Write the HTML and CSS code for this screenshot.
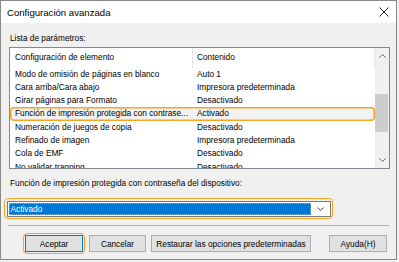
FILE: index.html
```html
<!DOCTYPE html>
<html lang="es">
<head>
    <meta charset="utf-8">
    <title>Configuración avanzada</title>
    <link rel="stylesheet" href="styles.css">
</head>
<body>
    <div class="dialog">
        <header class="title-bar">
            <span class="title">Configuración avanzada</span>
            <svg class="close-icon" width="10" height="10" viewBox="0 0 10 10">
                <path d="M0.5 0.5 L9.5 9.5 M9.5 0.5 L0.5 9.5" stroke="#222" stroke-width="1" fill="none"/>
            </svg>
        </header>
        <main class="dialog-body">
            <div class="label label-list">Lista de parámetros:</div>
            <div class="list-box">
                <div class="list-main">
                    <div class="list-header">
                        <div class="col col-name">Configuración de elemento</div>
                        <div class="col col-value">Contenido</div>
                    </div>
                    <div class="list-rows">
                        <div class="row"><div class="col col-name">Modo de omisión de páginas en blanco</div><div class="col col-value">Auto 1</div></div>
                        <div class="row"><div class="col col-name">Cara arriba/Cara abajo</div><div class="col col-value">Impresora predeterminada</div></div>
                        <div class="row"><div class="col col-name">Girar páginas para Formato</div><div class="col col-value">Desactivado</div></div>
                        <div class="row selected"><div class="col col-name">Función de impresión protegida con contrase...</div><div class="col col-value">Activado</div></div>
                        <div class="row"><div class="col col-name">Numeración de juegos de copia</div><div class="col col-value">Desactivado</div></div>
                        <div class="row"><div class="col col-name">Refinado de imagen</div><div class="col col-value">Impresora predeterminada</div></div>
                        <div class="row"><div class="col col-name">Cola de EMF</div><div class="col col-value">Desactivado</div></div>
                        <div class="row"><div class="col col-name">No validar trapping</div><div class="col col-value">Desactivado</div></div>
                    </div>
                </div>
                <div class="scrollbar">
                    <svg class="scroll-arrow" width="7" height="4" viewBox="0 0 7 4">
                        <path d="M0.5 3.5 L3.5 0.5 L6.5 3.5" stroke="#606060" stroke-width="1" fill="none"/>
                    </svg>
                    <div class="scroll-track">
                        <div class="scroll-thumb"></div>
                    </div>
                    <svg class="scroll-arrow" width="7" height="4" viewBox="0 0 7 4">
                        <path d="M0.5 0.5 L3.5 3.5 L6.5 0.5" stroke="#606060" stroke-width="1" fill="none"/>
                    </svg>
                </div>
            </div>
            <div class="label label-setting">Función de impresión protegida con contraseña del dispositivo:</div>
            <div class="focus-ring combo-ring">
                <div class="combo">
                    <div class="combo-value"><span class="combo-text">Activado</span></div>
                    <div class="combo-arrow">
                        <svg width="7" height="4" viewBox="0 0 7 4">
                            <path d="M0.5 0.5 L3.5 3.5 L6.5 0.5" stroke="#404040" stroke-width="1" fill="none"/>
                        </svg>
                    </div>
                </div>
            </div>
            <div class="separator"></div>
            <div class="button-row">
                <span class="focus-ring button-ring"><button class="btn btn-default btn-accept">Aceptar</button></span>
                <button class="btn btn-cancel">Cancelar</button>
                <button class="btn btn-restore">Restaurar las opciones predeterminadas</button>
                <button class="btn btn-help">Ayuda(H)</button>
            </div>
        </main>
    </div>
</body>
</html>
```

FILE: styles.css
```css
:root {
    --dialog-gray: #f0f0f0;
    --border-gray: #888888;
    --list-border: #828790;
    --focus-orange: #f5a524;
    --select-blue: #0078d7;
    --button-face: #e1e1e1;
    --button-border: #adadad;
    --ui-font: 'Liberation Sans', Arial, sans-serif;
}

* {
    box-sizing: border-box;
    margin: 0;
    padding: 0;
}

body {
    font-family: var(--ui-font);
    font-size: 8.3px;
    color: #000;
    background-color: var(--dialog-gray);
}

.dialog {
    width: 397px;
    height: 260px;
    border: 1px solid var(--border-gray);
    background-color: var(--dialog-gray);
    display: flex;
    flex-direction: column;
}

.title-bar {
    height: 22px;
    background-color: white;
    display: flex;
    align-items: center;
    justify-content: space-between;
    padding: 0 7px 0 6px;
}

.title {
    font-size: 9.6px;
}

.dialog-body {
    display: flex;
    flex-direction: column;
    padding-top: 9px;
}

.label {
    height: 12px;
    line-height: 12px;
    padding-left: 9px;
    white-space: nowrap;
}

.label-list {
    margin-bottom: 3px;
}

.list-box {
    margin-left: 8px;
    width: 381px;
    height: 122px;
    border: 1px solid var(--list-border);
    background-color: white;
    display: flex;
}

.list-main {
    flex: 1;
    display: flex;
    flex-direction: column;
    overflow: hidden;
}

.list-header {
    height: 19.5px;
    display: flex;
    align-items: center;
    flex-shrink: 0;
}

.list-header .col {
    height: 100%;
    line-height: 19px;
    border-right: 1px solid #e5e5e5;
}

.col {
    white-space: nowrap;
    overflow: hidden;
}

.col-name {
    width: 183px;
    padding-left: 5px;
}

.col-value {
    flex: 1;
    padding-left: 4px;
}

.list-rows {
    display: flex;
    flex-direction: column;
}

.row {
    height: 13.3px;
    line-height: 13.3px;
    display: flex;
    flex-shrink: 0;
}

.row.selected {
    background-color: #f2f2f2;
    border-radius: 4px;
    box-shadow: inset 0 0 0 1.5px var(--focus-orange);
}

.scrollbar {
    width: 14px;
    background-color: var(--dialog-gray);
    display: flex;
    flex-direction: column;
    align-items: center;
}

.scroll-arrow {
    flex-shrink: 0;
    margin: 6px 0;
}

.scroll-track {
    flex: 1;
    width: 100%;
    display: flex;
    flex-direction: column;
    padding-top: 30px;
}

.scroll-thumb {
    height: 38px;
    background-color: #cdcdcd;
    margin: 0 1px 0 0;
}

.label-setting {
    margin-top: 8px;
}

.focus-ring {
    border: 1.5px solid var(--focus-orange);
    border-radius: 4px;
}

.combo-ring {
    margin: 9px 0 0 3px;
    width: 329px;
    height: 21px;
    padding: 1.5px 1.5px;
}

.combo {
    height: 100%;
    border: 1px solid #7a7a7a;
    background-color: white;
    display: flex;
}

.combo-value {
    flex: 1;
    padding: 1px;
}

.combo-text {
    display: block;
    height: 100%;
    background-color: var(--select-blue);
    color: white;
    line-height: 13px;
    padding-left: 2px;
    outline: 1px dotted #7fb6e8;
    outline-offset: -1px;
}

.combo-arrow {
    width: 18px;
    display: flex;
    align-items: center;
    justify-content: center;
}

.separator {
    margin: 6px 0 0 7px;
    width: 381px;
    height: 1px;
    background-color: #b4b4b4;
}

.button-row {
    display: flex;
    align-items: center;
    margin-top: 7px;
    padding-left: 22px;
}

.button-ring {
    padding: 1px;
    display: inline-flex;
    margin-right: 4px;
}

.btn {
    height: 17px;
    font-family: var(--ui-font);
    font-size: 8.3px;
    color: #000;
    background-color: var(--button-face);
    border: 1px solid var(--button-border);
    white-space: nowrap;
}

.btn-default {
    border-color: var(--select-blue);
}

.btn-accept {
    width: 58px;
}

.btn-cancel {
    width: 57px;
    margin-right: 5px;
}

.btn-restore {
    width: 160px;
    margin-right: 18px;
}

.btn-help {
    width: 58px;
}
```
